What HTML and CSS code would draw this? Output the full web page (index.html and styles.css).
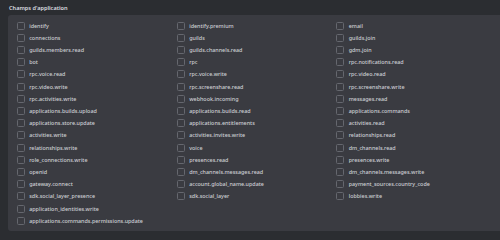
FILE: index.html
```html
<!DOCTYPE html>
<html>
<head>
    <meta charset="UTF-8">
    <title>Champs d'application</title>
    <link rel="stylesheet" href="styles.css">
</head>
<body>
    <div class="section">
        <h2 class="section-title">Champs d'application</h2>
        <div class="scopes">
            <div class="scope-col">
                <label class="scope"><span class="box"></span>identify</label>
                <label class="scope"><span class="box"></span>connections</label>
                <label class="scope"><span class="box"></span>guilds.members.read</label>
                <label class="scope"><span class="box"></span>bot</label>
                <label class="scope"><span class="box"></span>rpc.voice.read</label>
                <label class="scope"><span class="box"></span>rpc.video.write</label>
                <label class="scope"><span class="box"></span>rpc.activities.write</label>
                <label class="scope"><span class="box"></span>applications.builds.upload</label>
                <label class="scope"><span class="box"></span>applications.store.update</label>
                <label class="scope"><span class="box"></span>activities.write</label>
                <label class="scope"><span class="box"></span>relationships.write</label>
                <label class="scope"><span class="box"></span>role_connections.write</label>
                <label class="scope"><span class="box"></span>openid</label>
                <label class="scope"><span class="box"></span>gateway.connect</label>
                <label class="scope"><span class="box"></span>sdk.social_layer_presence</label>
                <label class="scope"><span class="box"></span>application_identities.write</label>
                <label class="scope"><span class="box"></span>applications.commands.permissions.update</label>
            </div>
            <div class="scope-col">
                <label class="scope"><span class="box"></span>identify.premium</label>
                <label class="scope"><span class="box"></span>guilds</label>
                <label class="scope"><span class="box"></span>guilds.channels.read</label>
                <label class="scope"><span class="box"></span>rpc</label>
                <label class="scope"><span class="box"></span>rpc.voice.write</label>
                <label class="scope"><span class="box"></span>rpc.screenshare.read</label>
                <label class="scope"><span class="box"></span>webhook.incoming</label>
                <label class="scope"><span class="box"></span>applications.builds.read</label>
                <label class="scope"><span class="box"></span>applications.entitlements</label>
                <label class="scope"><span class="box"></span>activities.invites.write</label>
                <label class="scope"><span class="box"></span>voice</label>
                <label class="scope"><span class="box"></span>presences.read</label>
                <label class="scope"><span class="box"></span>dm_channels.messages.read</label>
                <label class="scope"><span class="box"></span>account.global_name.update</label>
                <label class="scope"><span class="box"></span>sdk.social_layer</label>
            </div>
            <div class="scope-col">
                <label class="scope"><span class="box"></span>email</label>
                <label class="scope"><span class="box"></span>guilds.join</label>
                <label class="scope"><span class="box"></span>gdm.join</label>
                <label class="scope"><span class="box"></span>rpc.notifications.read</label>
                <label class="scope"><span class="box"></span>rpc.video.read</label>
                <label class="scope"><span class="box"></span>rpc.screenshare.write</label>
                <label class="scope"><span class="box"></span>messages.read</label>
                <label class="scope"><span class="box"></span>applications.commands</label>
                <label class="scope"><span class="box"></span>activities.read</label>
                <label class="scope"><span class="box"></span>relationships.read</label>
                <label class="scope"><span class="box"></span>dm_channels.read</label>
                <label class="scope"><span class="box"></span>presences.write</label>
                <label class="scope"><span class="box"></span>dm_channels.messages.write</label>
                <label class="scope"><span class="box"></span>payment_sources.country_code</label>
                <label class="scope"><span class="box"></span>lobbies.write</label>
            </div>
        </div>
    </div>
</body>
</html>
```

FILE: styles.css
```css
html, body {
    margin: 0;
    background-color: #2b2d31;
}
body {
    font-family: "Noto Sans", "Liberation Sans", Arial, sans-serif;
    width: 500px;
    height: 240px;
    overflow: hidden;
}
.section {
    padding-left: 8px;
}
.section-title {
    margin: 0;
    height: 15px;
    line-height: 16px;
    font-size: 5.6px;
    font-weight: 600;
    color: #dbdee1;
    padding-left: 1px;
}
.scopes {
    display: grid;
    grid-template-columns: 160px 159.5px 159.5px;
    background-color: #3a3b41;
    border-top-left-radius: 3px;
    border-bottom-left-radius: 3px;
    padding: 4.6px 0 4.2px 8.7px;
}
.scope-col {
    display: flex;
    flex-direction: column;
}
.scope {
    display: flex;
    align-items: center;
    height: 12.19px;
    font-size: 5.4px;
    font-weight: 500;
    color: #cdcfd4;
    white-space: nowrap;
}
.box {
    width: 6px;
    height: 6px;
    border: 1px solid #65676e;
    border-radius: 1.5px;
    margin-right: 4.5px;
    flex: none;
}
```
